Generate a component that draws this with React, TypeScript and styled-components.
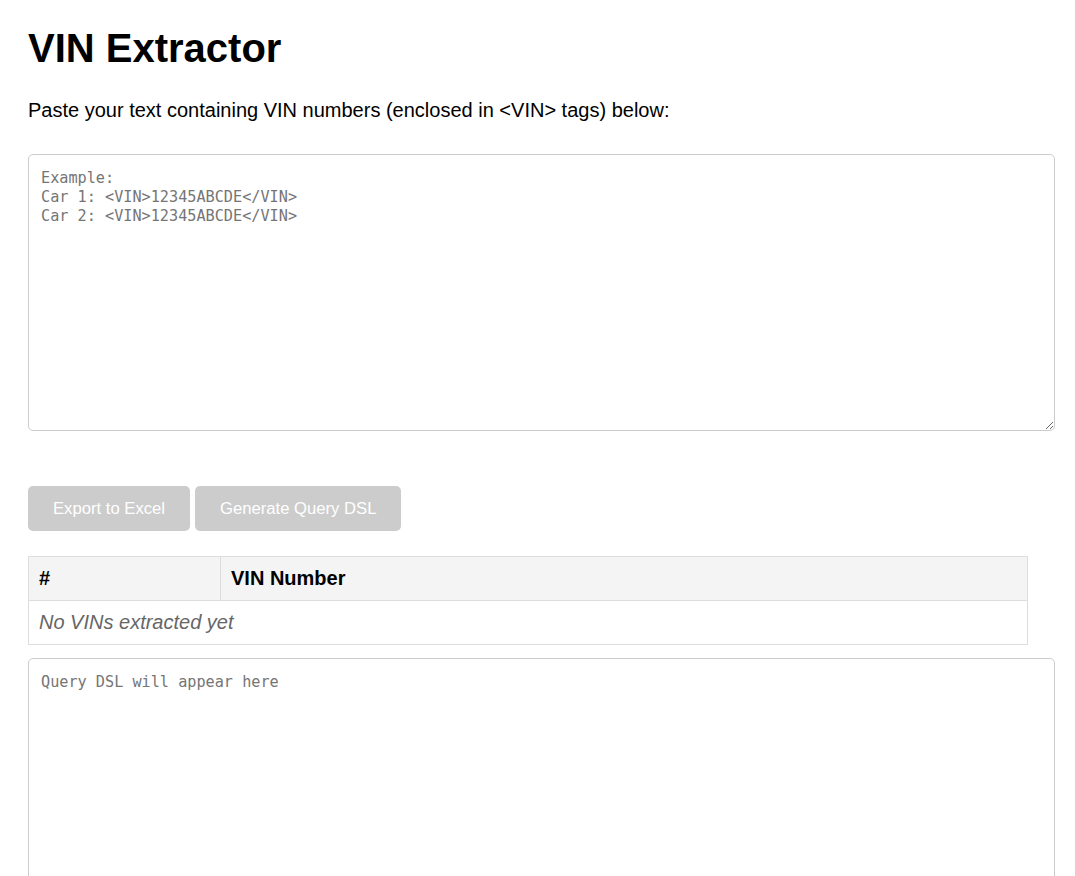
import React from "react";
import styled, { createGlobalStyle } from "styled-components";

const Global = createGlobalStyle`
  html, body { margin: 0; padding: 0; background: #fff; }
  body { font-family: "Liberation Sans", Arial, sans-serif; color: #000; }
`;

const Page = styled.div`
  padding: 25px 20px 0 28px;
  width: 1000px;
  display: flex;
  flex-direction: column;
  align-items: flex-start;
`;

const Title = styled.h1`
  margin: 0;
  font-size: 40px;
  line-height: 46px;
  font-weight: 700;
`;

const Lead = styled.p`
  margin: 28px 0 32px;
  font-size: 20px;
  line-height: 23px;
`;

const Area = styled.textarea<{ $mt?: number }>`
  box-sizing: content-box;
  width: 1000px;
  height: 250px;
  margin: ${(p) => p.$mt ?? 0}px 0 0;
  padding: 14px 13px 11px 12px;
  border: 1px solid #ccc;
  border-radius: 5px;
  font-family: "DejaVu Sans Mono", "Liberation Mono", monospace;
  font-size: 15.2px;
  line-height: 19px;
  color: #333;
  resize: vertical;
  outline: none;
  &::placeholder { color: #757575; }
`;

const Actions = styled.div`
  display: flex;
  gap: 5px;
  margin-top: 55px;
`;

const Button = styled.button`
  font-family: "Liberation Sans", Arial, sans-serif;
  font-size: 16.67px;
  line-height: 19px;
  padding: 13px 25px;
  border: none;
  border-radius: 5px;
  background: #cccccc;
  color: #ffffff;
  cursor: not-allowed;
`;

const Table = styled.table`
  margin-top: 25px;
  width: 1000px;
  border-collapse: collapse;
  font-size: 20px;
  line-height: 23px;
`;

const Th = styled.th<{ $w?: number }>`
  text-align: left;
  font-weight: 700;
  background: #f4f4f4;
  border: 1px solid #ddd;
  padding: 10px;
  ${(p) => (p.$w ? `width: ${p.$w}px;` : "")}
`;

const EmptyCell = styled.td`
  border: 1px solid #ddd;
  padding: 10px;
  font-style: italic;
  color: #666;
`;

export default function App() {
  return (
    <>
      <Global />
      <Page>
        <Title>VIN Extractor</Title>
        <Lead>Paste your text containing VIN numbers (enclosed in &lt;VIN&gt; tags) below:</Lead>
        <Area
          placeholder={"Example:\nCar 1: <VIN>12345ABCDE</VIN>\nCar 2: <VIN>12345ABCDE</VIN>"}
        />
        <Actions>
          <Button disabled>Export to Excel</Button>
          <Button disabled>Generate Query DSL</Button>
        </Actions>
        <Table>
          <thead>
            <tr>
              <Th $w={171}>#</Th>
              <Th>VIN Number</Th>
            </tr>
          </thead>
          <tbody>
            <tr>
              <EmptyCell colSpan={2}>No VINs extracted yet</EmptyCell>
            </tr>
          </tbody>
        </Table>
        <Area $mt={13} placeholder="Query DSL will appear here" readOnly />
      </Page>
    </>
  );
}
